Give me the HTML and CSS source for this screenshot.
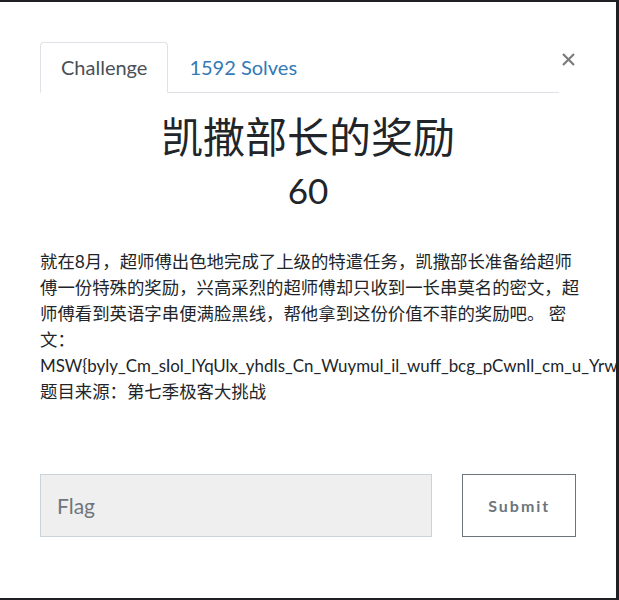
FILE: index.html
```html
<!DOCTYPE html>
<html lang="zh">
  <head>
    <meta charset="UTF-8">
    <title>凯撒部长的奖励</title>
    <link rel="stylesheet" href="styles.css">
  </head>
  <body>
    <div class="modal">
      <button class="close" type="button" aria-label="Close">
        <svg width="13" height="13" viewBox="0 0 13 13">
          <path d="M1 1L12 12M12 1L1 12" stroke="#7b7b7b" stroke-width="2.2" fill="none"/>
        </svg>
      </button>

      <ul class="nav-tabs">
        <li class="tab active">Challenge</li>
        <li class="tab"><a href="#">1592 Solves</a></li>
      </ul>

      <div class="tab-content">
        <h3 class="challenge-name">凯撒部长的奖励</h3>
        <h4 class="challenge-value">60</h4>

        <div class="challenge-desc">
          <p>就在8月，超师傅出色地完成了上级的特遣任务，凯撒部长准备给超师傅一份特殊的奖励，兴高采烈的超师傅却只收到一长串莫名的密文，超师傅看到英语字串便满脸黑线，帮他拿到这份价值不菲的奖励吧。 密文：</p>
          <p class="nowrap">MSW{byly_Cm_sIol_lYqUlx_yhdIs_Cn_Wuymul_il_wuff_bcg_pCwnIl_cm_u_Yrwyxmnlz}</p>
          <p>题目来源：第七季极客大挑战</p>
        </div>

        <form class="submit-row">
          <input type="text" class="flag-input" placeholder="Flag">
          <button type="submit" class="submit-btn">Submit</button>
        </form>
      </div>
    </div>
  </body>
</html>
```

FILE: styles.css
```css
html, body {
    margin: 0;
    padding: 0;
}
body {
    background-color: #1f2023;
    font-family: Lato, "Noto Sans CJK SC", sans-serif;
    color: #212529;
    height: 600px;
    overflow: hidden;
}
.modal {
    position: relative;
    box-sizing: border-box;
    margin-top: 2px;
    width: 616px;
    height: 596px;
    background: white;
    padding: 40px 40px 0 40px;
    overflow: hidden;
}
.close {
    position: absolute;
    top: 51px;
    left: 562px;
    border: none;
    background: none;
    padding: 0;
    width: 13px;
    height: 13px;
    cursor: pointer;
}
.close svg {
    display: block;
}
.nav-tabs {
    list-style: none;
    margin: 0 17px 0 0;
    padding: 0;
    display: flex;
    border-bottom: 1px solid #dee2e6;
}
.tab {
    font-size: 20px;
    line-height: 29px;
    padding: 10px 20px;
    margin-bottom: -1px;
    border: 1px solid transparent;
    border-top-left-radius: 4px;
    border-top-right-radius: 4px;
    color: #495057;
}
.tab.active {
    border-color: #dee2e6 #dee2e6 white;
    background: white;
}
.tab a {
    color: #337ab7;
    text-decoration: none;
}
.tab-content {
    text-align: center;
}
.challenge-name {
    font-weight: normal;
    font-size: 42px;
    line-height: 50px;
    margin: 19px 0 0 0;
    color: #212529;
}
.challenge-value {
    font-weight: normal;
    font-size: 35px;
    line-height: 44px;
    margin: 6px 0 0 0;
    color: #212529;
}
.challenge-desc {
    text-align: left;
    font-size: 17.4px;
    line-height: 26px;
    margin: 37px -5px 0 0;
    color: #212529;
}
.challenge-desc p {
    margin: 0;
}
.nowrap {
    white-space: nowrap;
    font-size: 16.9px;
}
.submit-row {
    display: flex;
    gap: 30px;
    margin-top: 69px;
}
.flag-input {
    box-sizing: border-box;
    width: 394px;
    height: 63px;
    border: 1px solid #c9d3dc;
    background: #efefef;
    padding: 0 16px;
    font-family: Lato, sans-serif;
    font-size: 21px;
    color: #495057;
}
.flag-input::placeholder {
    color: #70757b;
}
.submit-btn {
    box-sizing: border-box;
    width: 114px;
    height: 63px;
    border: 1px solid #6c757d;
    background: white;
    font-family: Lato, sans-serif;
    font-weight: bold;
    font-size: 16px;
    letter-spacing: 2px;
    color: #6c757d;
    cursor: pointer;
}
```
